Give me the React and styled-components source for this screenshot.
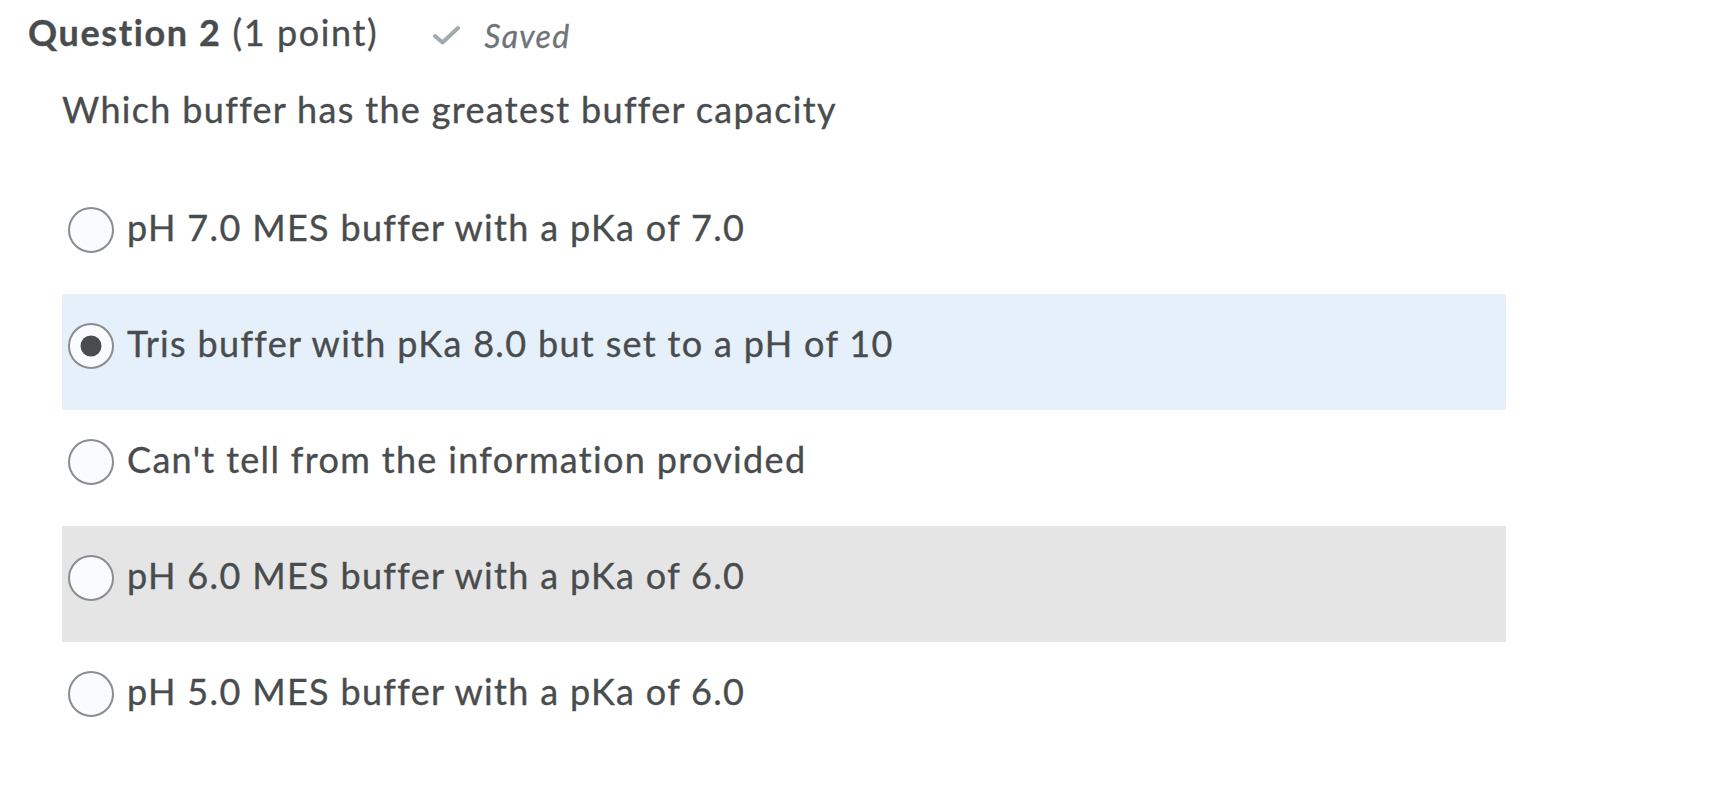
import React from 'react'
import styled, { createGlobalStyle } from 'styled-components'

const ink = '#494c4e'

const GlobalStyle = createGlobalStyle`
  body {
    margin: 0;
    background: #ffffff;
    font-family: Lato, "Open Sans", "Liberation Sans", sans-serif;
    color: ${ink};
    font-variant-ligatures: none;
    -webkit-text-stroke: 0.35px currentColor;
  }
`

const Page = styled.div`
  padding: 11px 0 0 28px;
`

const Header = styled.div`
  display: flex;
  align-items: baseline;
  font-size: 36px;
  line-height: 1.2;
  letter-spacing: 0.045em;
`

const Title = styled.h2`
  margin: 0;
  font-size: inherit;
  font-weight: 400;
  color: ${ink};
`

const Strong = styled.strong`
  font-weight: 700;
`

const SavedState = styled.span`
  display: flex;
  align-items: center;
  gap: 23px;
  margin-left: 54px;
  font-size: 32px;
  font-style: italic;
  letter-spacing: 0.04em;
  color: #6e7377;
  -webkit-text-stroke: 0.3px currentColor;
`

const CheckIcon = styled.svg`
  width: 29px;
  height: 20px;
  align-self: center;
  transform: translateY(-1px);
`

const Prompt = styled.p`
  margin: 33px 0 0 34px;
  font-size: 36px;
  line-height: 1.2;
  letter-spacing: 0.037em;
`

const Options = styled.div`
  display: flex;
  flex-direction: column;
  width: 1444px;
  margin: 47px 0 0 34px;
`

const Option = styled.label`
  display: flex;
  align-items: center;
  gap: 13px;
  height: 116px;
  box-sizing: border-box;
  padding: 0 0 12px 6px;
  font-size: 36px;
  line-height: 1.2;
  letter-spacing: 0.037em;
  background: ${p => (p.$tone === 'selected' ? '#e6f0fa' : p.$tone === 'hover' ? '#e5e5e5' : 'transparent')};
`

const OptionText = styled.span`
  margin-bottom: 5px;
`

const Radio = styled.span`
  position: relative;
  flex: none;
  width: 46px;
  height: 46px;
  box-sizing: border-box;
  border-radius: 50%;
  border: 2px solid #8a8d90;
  background: #f9fbff;

  &::after {
    content: '';
    display: ${p => (p.$checked ? 'block' : 'none')};
    position: absolute;
    left: 50%;
    top: 50%;
    width: 21px;
    height: 21px;
    border-radius: 50%;
    background: ${ink};
    transform: translate(-50%, -50%);
  }
`

const options = [
  { text: 'pH 7.0 MES buffer with a pKa of 7.0' },
  { text: 'Tris buffer with pKa 8.0 but set to a pH of 10', tone: 'selected', checked: true },
  { text: "Can't tell from the information provided" },
  { text: 'pH 6.0 MES buffer with a pKa of 6.0', tone: 'hover' },
  { text: 'pH 5.0 MES buffer with a pKa of 6.0' }
]

export default function App() {
  return (
    <Page>
      <GlobalStyle />
      <Header>
        <Title>
          <Strong>Question 2</Strong> (1 point)
        </Title>
        <SavedState>
          <CheckIcon viewBox="0 0 29 20">
            <path d="M3 11 L10.5 17.5 L26 3" fill="none" stroke="#a3aaae" strokeWidth="4" strokeLinecap="round" strokeLinejoin="round" />
          </CheckIcon>
          Saved
        </SavedState>
      </Header>
      <Prompt>Which buffer has the greatest buffer capacity</Prompt>
      <Options>
        {options.map(o => (
          <Option key={o.text} $tone={o.tone}>
            <Radio $checked={o.checked} />
            <OptionText>{o.text}</OptionText>
          </Option>
        ))}
      </Options>
    </Page>
  )
}
